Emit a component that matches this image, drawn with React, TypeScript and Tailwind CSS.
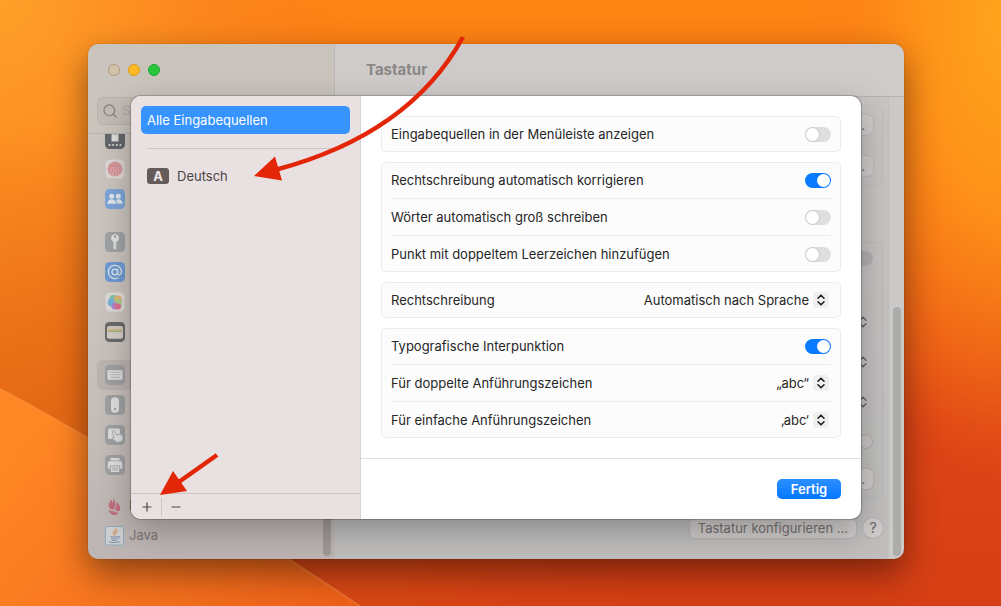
import { useState, type ReactNode } from 'react'
import { Search } from 'lucide-react'

const font = 'font-[Inter,"Liberation_Sans",sans-serif]'

function Wallpaper (): ReactNode {
  return (
    <svg className="absolute inset-0 size-full" viewBox="0 0 1001 606" preserveAspectRatio="none" aria-hidden="true">
      <defs>
        <linearGradient id="sky" x1="0" y1="0" x2="0" y2="1">
          <stop offset="0" stopColor="#ff8614" />
          <stop offset="0.35" stopColor="#f86c14" />
          <stop offset="0.7" stopColor="#df4516" />
          <stop offset="1" stopColor="#d63e14" />
        </linearGradient>
        <linearGradient id="left" x1="0" y1="0" x2="1" y2="0">
          <stop offset="0" stopColor="#fd8a20" />
          <stop offset="0.5" stopColor="#f97c1a" />
          <stop offset="1" stopColor="#f97c1a" stopOpacity="0" />
        </linearGradient>
        <radialGradient id="sun" gradientUnits="userSpaceOnUse" cx="0" cy="0" r="1" gradientTransform="translate(1001 20) scale(190 460)">
          <stop offset="0" stopColor="#ffa41c" />
          <stop offset="0.4" stopColor="#ff981a" stopOpacity="0.85" />
          <stop offset="1" stopColor="#f87a16" stopOpacity="0" />
        </radialGradient>
        <radialGradient id="corner" gradientUnits="userSpaceOnUse" cx="0" cy="0" r="320">
          <stop offset="0" stopColor="#ffa02a" />
          <stop offset="1" stopColor="#ff9020" stopOpacity="0" />
        </radialGradient>
        <linearGradient id="shade" x1="0" y1="0" x2="0" y2="1">
          <stop offset="0" stopColor="#d8580e" stopOpacity="0" />
          <stop offset="1" stopColor="#d8580e" stopOpacity="0.7" />
        </linearGradient>
        <linearGradient id="ember" x1="0" y1="0" x2="1" y2="0">
          <stop offset="0" stopColor="#d94714" />
          <stop offset="0.3" stopColor="#d94714" />
          <stop offset="1" stopColor="#d63e14" stopOpacity="0" />
        </linearGradient>
        <linearGradient id="dune" x1="0" y1="0.4" x2="1" y2="0.9">
          <stop offset="0" stopColor="#ff8624" />
          <stop offset="1" stopColor="#ee6018" />
        </linearGradient>
      </defs>
      <rect width="1001" height="606" fill="url(#sky)" />
      <rect width="360" height="606" fill="url(#left)" />
      <rect width="400" height="400" fill="url(#corner)" />
      <rect x="800" width="201" height="490" fill="url(#sun)" />
      <path d="M0 120H88V438C60 422 30 404 0 389Z" fill="url(#shade)" />
      <path d="M270 545 360 606H700V545Z" fill="url(#ember)" />
      <path d="M0 389C30 404 60 422 88 438C170 484 280 552 360 606H0Z" fill="url(#dune)" />
      <path d="M0 389C30 404 60 422 88 438C170 484 280 552 360 606" fill="none" stroke="#ffa050" strokeOpacity="0.35" strokeWidth="2" />
    </svg>
  )
}

function Chevrons ({ className }: { className: string }): ReactNode {
  return (
    <svg viewBox="0 0 16 16" className={className} fill="none" stroke="currentColor" strokeWidth="1.6" strokeLinecap="round" strokeLinejoin="round" aria-hidden="true">
      <path d="M5 6.2 8 3.2l3 3M5 9.8l3 3 3-3" />
    </svg>
  )
}

/* Sidebar icons, all drawn on a 20x20 tile */
const tile = 'size-5 shrink-0'

const icons: Record<string, ReactNode> = {
  lock: (
    <svg viewBox="0 0 20 20" className={tile}>
      <rect width="20" height="20" rx="4.5" fill="#63666a" />
      <path d="M6.5 5.5h7v7h-7z" fill="#dcdcdb" />
      <path d="M8 6V4a2 2 0 0 1 4 0v2" fill="none" stroke="#dcdcdb" strokeWidth="1.4" />
      <g fill="#dcdcdb"><circle cx="4.6" cy="15.9" r="1" /><circle cx="8.2" cy="15.9" r="1" /><circle cx="11.8" cy="15.9" r="1" /><circle cx="15.4" cy="15.9" r="1" /></g>
    </svg>
  ),
  touch: (
    <svg viewBox="0 0 20 20" className={tile}>
      <rect x="0.5" y="0.5" width="19" height="19" rx="4.5" fill="#dcd8d6" stroke="#d0cbc8" />
      <circle cx="10" cy="10" r="7.6" fill="#dca9ab" />
      <g fill="none" stroke="#cf8388" strokeWidth="0.9" strokeLinecap="round">
        <path d="M4 7.2c3-4.4 9-4.4 12 0M3 10.5c1.2-6 12.5-6.5 14 .5M4.2 14c.6-2 .2-2.500.8-4.200 1.8-4.2 8.8-3.7 10 .8.3 1.4.3 2.3 0 3.6M6.5 16c1-2.3.4-3.7 1-5.3 1-2.3 4.3-2 5 .4.5 1.9.2 3.6-.5 5.4M9.3 17c1-2.5.7-4 .7-5.8" />
      </g>
    </svg>
  ),
  users: (
    <svg viewBox="0 0 20 20" className={tile}>
      <rect width="20" height="20" rx="4.5" fill="#7da4d8" />
      <g fill="#dfe5ec">
        <circle cx="6.7" cy="7.2" r="2.5" /><circle cx="13.3" cy="7.2" r="2.5" />
        <path d="M2.3 14.8c0-6.2 8.8-6.2 8.8 0zM12 14.8c0-1.500-.4-2.800-1.200-3.700 2.600-2 6.900-.5 6.900 3.700z" />
      </g>
    </svg>
  ),
  key: (
    <svg viewBox="0 0 20 20" className={tile}>
      <rect width="20" height="20" rx="4.5" fill="#a0a3a5" />
      <path d="M10 2.200a3.900 3.900 0 0 0-1.500 7.500v6.600l1.500 1.500 1.700-1.700-1.100-1.400 1.100-1.400-1.100-1.300.9-.9V9.700A3.900 3.900 0 0 0 10 2.200Z" fill="#e0e0df" />
      <circle cx="10" cy="4.6" r="1.1" fill="#8f9294" />
    </svg>
  ),
  at: (
    <svg viewBox="0 0 20 20" className={tile}>
      <rect width="20" height="20" rx="4.5" fill="#6f9bd2" />
      <g fill="none" stroke="#dce4ec" strokeWidth="1.3" strokeLinecap="round">
        <circle cx="9.8" cy="10" r="2.8" />
        <path d="M12.700 7.200v4.200c0 2.300 3.800 2 3.800-1.600A6.600 6.600 0 1 0 13 15.800" />
      </g>
    </svg>
  ),
  game: (
    <svg viewBox="0 0 20 20" className={tile}>
      <rect x="0.5" y="0.5" width="19" height="19" rx="4.5" fill="#dedbd9" stroke="#d4d0ce" />
      <circle cx="8.5" cy="7" r="4" fill="#7fc3a2" />
      <circle cx="6.7" cy="10.5" r="4" fill="#76b3d8" />
      <circle cx="13" cy="7.5" r="4" fill="#e2b777" />
      <circle cx="13.2" cy="11" r="4" fill="#a5d08b" fillOpacity="0.8" />
      <circle cx="10" cy="14" r="3.6" fill="#b183d0" />
      <circle cx="13" cy="14.5" r="3" fill="#e0708f" />
    </svg>
  ),
  wallet: (
    <svg viewBox="0 0 20 20" className={tile}>
      <rect width="20" height="20" rx="4.5" fill="#696a69" />
      <rect x="2" y="4" width="16" height="12.5" rx="2" fill="#cfc8c0" />
      <path d="M3 7.300h14v1.200H3z" fill="#d2b36d" /><path d="M3 8.800h14V10H3z" fill="#9fb07a" />
      <path d="M2 10h5.500c.8 0 .8 1.600 2.500 1.600s1.700-1.600 2.500-1.600H18v4.500a2 2 0 0 1-2 2H4a2 2 0 0 1-2-2z" fill="#d2ccc6" />
    </svg>
  ),
  keyboard: (
    <svg viewBox="0 0 20 20" className={tile}>
      <rect width="20" height="20" rx="4.5" fill="#9fa0a1" />
      <rect x="2.5" y="5.3" width="15" height="9.4" rx="1.2" fill="#dededd" />
      <path d="M4.500 7.300h11M4.500 9.700h11" stroke="#b3b4b5" strokeWidth="1.2" strokeDasharray="1.5 .6" />
      <path d="M5.500 12.300h9" stroke="#b3b4b5" strokeWidth="1.2" />
    </svg>
  ),
  mouse: (
    <svg viewBox="0 0 20 20" className={tile}>
      <rect width="20" height="20" rx="4.5" fill="#9fa0a1" />
      <rect x="6" y="2.2" width="8" height="15.6" rx="4" fill="#dededd" />
      <circle cx="10" cy="14" r="1" fill="#8a8b8c" />
    </svg>
  ),
  trackpad: (
    <svg viewBox="0 0 20 20" className={tile}>
      <rect width="20" height="20" rx="4.5" fill="#9fa0a1" />
      <rect x="3" y="3.5" width="12" height="10.5" rx="1.5" fill="#dcdddd" />
      <path d="M8 5.500c.8-.4 1.400 0 1.700.7l1.700 3.500 3.900-.6c2.500.5 3.200 3.500 2.500 5.500-.8 2.300-3.800 3.300-6.200 2.400L7 13.600c-.3-1 .8-1.400 2-.9L7.300 7c-.2-.7 0-1.200.7-1.500Z" fill="#dcdddd" stroke="#9fa0a1" strokeWidth="0.8" />
    </svg>
  ),
  printer: (
    <svg viewBox="0 0 20 20" className={tile}>
      <rect width="20" height="20" rx="4.5" fill="#9fa0a1" />
      <path d="M5.500 3h9v2.500h-9zM4.500 6.200h11A1.700 1.700 0 0 1 17.200 8v5.800h-2V10.500H4.800v3.300h-2V8a1.700 1.700 0 0 1 1.700-1.800Z" fill="#dededd" />
      <path d="M5.800 11.300h8.400v5.700H5.800z" fill="#dededd" />
      <path d="M7.200 13h5.600M7.200 15h5.600" stroke="#9fa0a1" strokeWidth="0.9" />
    </svg>
  ),
  backup: (
    <svg viewBox="0 0 20 20" className={tile}>
      <g fill="#c2707f">
        <path d="M8.500.5c.6 3.800 2.200 5 2 8-.1 2-1.500 3-1.300 5.300C5.500 13.500 3.400 12 3.600 9.300c.1-2.500 2-3 1.900-5.800 2 .8 1.700 2.300 1.600 3.400C8.900 5 8.900 2.600 8.500.5Z" />
        <path d="M11.500 6c2.600 2 3.600 4 3.600 6.700 0 1.800-.6 2.600-2.200 2.500-2 0-2.800-1.300-2.500-3.200.3-1.700 1.500-2.600 1.100-6Z" />
        <path d="M3.700 14c2 1.400 3.700 1 5.500 1.500 1.400.3 2 1.400 4.500 1-2.300 4-8.900 3.600-10-2.500Z" />
      </g>
    </svg>
  ),
  java: (
    <svg viewBox="0 0 20 20" className={tile}>
      <rect x="0.5" y="0.5" width="18" height="18.5" rx="2" fill="#cfd0d1" stroke="#8faabd" />
      <path d="M11 2.500c1 1.800-3.300 2.700-2.700 4.500.2.800 1 1.300 1 2.200M12.500 5c-2 .8-2 1.800-1.600 3" fill="none" stroke="#d6935b" strokeWidth="1.1" strokeLinecap="round" />
      <g fill="none" stroke="#7590ab" strokeWidth="1" strokeLinecap="round">
        <path d="M6 10.500c2 .8 5 .8 7 0M6.500 12.500c2 .6 4 .6 5.500 0M7 14.300c1.500.5 3.500.5 5 0M4 15.700c2.500 1.300 8 1.300 11 0M13.500 10.500c2-.3 1.700 1.700 0 2.200" />
      </g>
    </svg>
  )
}

function SidebarItem ({ icon, label, active = false }: { icon: string, label?: string, active?: boolean }): ReactNode {
  return (
    <li className={`flex h-[30px] items-center gap-1 rounded-md pl-2 text-[13px] text-[#7b7674] ${active ? 'bg-black/6' : ''}`}>
      {icons[icon]}
      {label}
    </li>
  )
}

function Sidebar (): ReactNode {
  return (
    <aside className="relative flex w-[247px] shrink-0 flex-col border-r border-[#bdb8b5] bg-linear-to-b from-[#c9c4bc] via-[#cbc3be] to-[#bdb5b3]">
      <div className="flex items-center gap-2 pt-5 pl-5">
        <button aria-label="Schließen" className="size-3 rounded-full border border-[#b09b82] bg-[#d3c2ab]" />
        <button aria-label="Minimieren" className="size-3 rounded-full border border-[#dc9d1c] bg-[#fcb924]" />
        <button aria-label="Vergrößern" className="size-3 rounded-full border border-[#1da62f] bg-[#27c83c]" />
      </div>
      <label className="mx-[9px] mt-[21px] flex h-7 items-center gap-1 rounded-md border border-black/5 bg-black/4 pl-1 text-[#8a8580]">
        <Search className="size-4 shrink-0" />
        <input type="search" placeholder="Suchen" className="w-full min-w-0 bg-transparent text-[13px] outline-none placeholder:text-[#aaa5a0]" />
      </label>
      <div className="mt-2 h-[426px] overflow-hidden border-t border-[#b9b4ae]">
        <ul className="-mt-2.5 px-[9px]">
          <SidebarItem icon="lock" />
          <SidebarItem icon="touch" />
          <SidebarItem icon="users" />
          <li className="h-[13px]" />
          <SidebarItem icon="key" />
          <SidebarItem icon="at" />
          <SidebarItem icon="game" />
          <SidebarItem icon="wallet" />
          <li className="h-[13px]" />
          <SidebarItem icon="keyboard" active />
          <SidebarItem icon="mouse" />
          <SidebarItem icon="trackpad" />
          <SidebarItem icon="printer" />
          <li className="h-[11px]" />
          <SidebarItem icon="backup" label="I" />
          <SidebarItem icon="java" label="Java" />
        </ul>
      </div>
      <div className="absolute right-[3px] bottom-[3px] h-60 w-2 rounded-full bg-[#a19a98]" />
    </aside>
  )
}

const paneButton = 'h-5 shrink-0 rounded-md bg-[#cfcccb] px-2 text-right text-[13px] leading-5 text-[#757170] shadow-[0_0_1px_1px_rgba(0,0,0,0.06)]'

function KeyboardPane (): ReactNode {
  return (
    <main className="flex min-w-0 flex-1 flex-col">
      <header className="flex h-[53px] items-center border-b border-[#b6b2b1] bg-[#cfcbca] pl-[31px]">
        <h1 className="text-[15px] font-bold text-[#8b8786]">Tastatur</h1>
      </header>
      <div className="flex flex-1">
        <div className="flex min-w-0 flex-1 flex-col bg-linear-to-b from-[#c9c5c4] to-[#bfbebd] pr-[5px] pl-5">
          <section className="mt-2 flex h-[81px] flex-col items-end gap-[21px] rounded-md border border-black/4 pt-[9px] pr-[9px]">
            <button className={`${paneButton} w-24`}>...</button>
            <button className={`${paneButton} w-24`}>...</button>
          </section>
          <section className="mt-14 flex h-64 flex-col items-end gap-6 rounded-md border border-black/4 pt-2 pr-[9px] text-[#6d6a69]">
            <span className="mb-6 h-[15px] w-[26px] shrink-0 rounded-full bg-[#b3b1b0]" />
            <Chevrons className="mr-0.5 size-4 shrink-0" />
            <Chevrons className="mr-0.5 size-4 shrink-0" />
            <Chevrons className="mr-0.5 size-4 shrink-0" />
            <span className="size-[15px] shrink-0 rounded-full border border-[#adabaa] bg-[#c8c5c4]" />
            <button className={`${paneButton} -mt-1 w-24`}>...</button>
          </section>
          <div className="mt-5 flex items-center justify-end gap-[7px]">
            <button className={`${paneButton} whitespace-nowrap`}>Tastatur konfigurieren ...</button>
            <button className="size-5 rounded-full bg-[#cfcccb] text-[15px] leading-5 text-[#6f6c6b] shadow-[0_0_1px_1px_rgba(0,0,0,0.06)]">?</button>
          </div>
        </div>
        <div className="flex w-4 flex-col items-end justify-end border-l border-[#c2c0bf] bg-[#cbcac9] pr-[3px] pb-[3px]">
          <div className="h-[249px] w-2 rounded-full bg-[#acacab]" />
        </div>
      </div>
    </main>
  )
}

function Group ({ children }: { children: ReactNode }): ReactNode {
  return <section className="divide-y divide-[#ebebeb] rounded-[5px] bg-[#fcfcfc] px-2.5 inset-ring inset-ring-[#ececec]">{children}</section>
}

function ToggleRow ({ label, on = false }: { label: string, on?: boolean }): ReactNode {
  const [checked, setChecked] = useState(on)
  return (
    <label className="box-content flex h-9 items-center justify-between">
      {label}
      <input
        type="checkbox"
        role="switch"
        checked={checked}
        onChange={(e) => setChecked(e.target.checked)}
        className="flex h-[15px] w-[26px] appearance-none items-center rounded-full bg-[#dfdfdf] px-px before:size-[13px] before:rounded-full before:bg-white before:shadow-[0_0_1px_1px_rgba(0,0,0,0.1)] checked:justify-end checked:bg-[#0a7aff] checked:before:shadow-none"
      />
    </label>
  )
}

function SelectRow ({ label, value }: { label: string, value: string }): ReactNode {
  return (
    <label className="box-content flex h-9 items-center justify-between pr-0.5">
      {label}
      <span className="relative flex items-center">
        <select className="field-sizing-content appearance-none bg-transparent pr-5 outline-none">
          <option>{value}</option>
        </select>
        <Chevrons className="pointer-events-none absolute right-0 size-4 rounded-sm bg-[#efefef] text-[#222]" />
      </span>
    </label>
  )
}

function InputSourcesDialog (): ReactNode {
  return (
    <div role="dialog" aria-label="Eingabequellen" className="absolute inset-x-[43px] top-[52px] bottom-10 flex overflow-hidden rounded-[10px] bg-white text-[13px] leading-5 text-[#262626] shadow-[0_0_1px_1px_rgba(0,0,0,0.22),0_12px_34px_rgba(0,0,0,0.28)]">
      <div className="flex w-[230px] shrink-0 flex-col border-r border-[#d9d2d2] bg-[#e9e1e1]">
        <div className="flex-1 px-2.5 pt-2.5 text-[#4a4444]">
          <button className="h-7 w-full rounded-[5px] bg-[#3693ff] px-1.5 text-left text-white">Alle Eingabequellen</button>
          <hr className="mx-1.5 mt-3.5 border-[#cfc8c8]" />
          <button className="mt-[17px] ml-1.5 flex items-center gap-2">
            <span className="h-4 w-[22px] rounded-[3px] bg-[#655b5a] text-center leading-4 font-bold text-[#f0e9e9]">A</span>
            Deutsch
          </button>
        </div>
        <div className="flex h-[26px] items-center border-t border-[#cdc5c5] text-[#4a4444]">
          <button aria-label="Hinzufügen" className="flex h-[18px] w-[31px] items-center justify-center border-r border-[#cdc5c5] pl-0.5">
            <svg viewBox="0 0 10 10" className="size-2.5" stroke="currentColor" strokeWidth="1.2"><path d="M5 .5v9M.5 5h9" /></svg>
          </button>
          <button aria-label="Entfernen" className="flex h-[18px] w-7 items-center justify-center">
            <svg viewBox="0 0 10 10" className="size-2.5" stroke="currentColor" strokeWidth="1.2"><path d="M.5 5h9" /></svg>
          </button>
        </div>
      </div>
      <div className="flex min-w-0 flex-1 flex-col">
        <div className="flex flex-1 flex-col gap-2.5 px-5 pt-5">
          <Group>
            <ToggleRow label="Eingabequellen in der Menüleiste anzeigen" />
          </Group>
          <Group>
            <ToggleRow label="Rechtschreibung automatisch korrigieren" on />
            <ToggleRow label="Wörter automatisch groß schreiben" />
            <ToggleRow label="Punkt mit doppeltem Leerzeichen hinzufügen" />
          </Group>
          <Group>
            <SelectRow label="Rechtschreibung" value="Automatisch nach Sprache" />
          </Group>
          <Group>
            <ToggleRow label="Typografische Interpunktion" on />
            <SelectRow label="Für doppelte Anführungszeichen" value="„abc“" />
            <SelectRow label="Für einfache Anführungszeichen" value="‚abc‘" />
          </Group>
        </div>
        <footer className="flex h-[61px] items-center justify-end border-t border-[#e0e0e0] px-5">
          <button className="h-5 w-16 rounded-[5px] bg-linear-to-b from-[#2a8fff] to-[#0077ff] font-semibold text-white">Fertig</button>
        </footer>
      </div>
    </div>
  )
}

function Arrows (): ReactNode {
  return (
    <svg width="1001" height="606" className="pointer-events-none absolute top-0 left-0" aria-hidden="true">
      <g fill="none" stroke="#e32607" strokeWidth="4.5">
        <path d="M463 37C428 101 366 146 275 170" />
        <path d="M217 455 176 484" />
      </g>
      <path d="M254 176 275 156.500 282 180.500Z" fill="#e32607" />
      <path d="M160 495 173 471 187 491Z" fill="#e32607" />
    </svg>
  )
}

export default function App (): ReactNode {
  return (
    <div className={`relative min-h-screen overflow-hidden bg-[#f9741a] pt-11 pr-[97px] pb-10 pl-[88px] ${font}`}>
      <Wallpaper />
      <div className="relative rounded-[10px] shadow-[0_0_1px_rgba(0,0,0,0.5),0_14px_34px_rgba(0,0,0,0.45)]">
        <div className="flex overflow-hidden rounded-[10px]">
          <Sidebar />
          <KeyboardPane />
        </div>
        <InputSourcesDialog />
      </div>
      <Arrows />
    </div>
  )
}
